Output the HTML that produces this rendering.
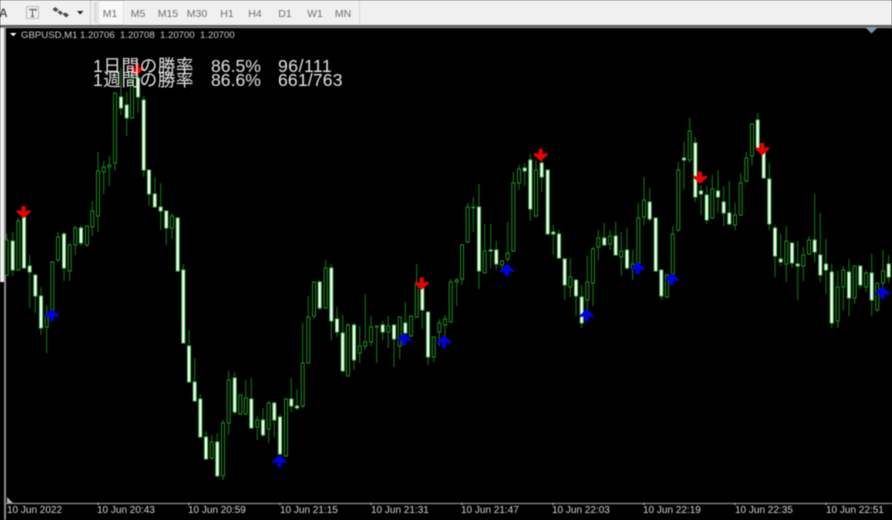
<!DOCTYPE html>
<html lang="ja"><head><meta charset="utf-8"><title>GBPUSD,M1</title>
<style>
html,body{margin:0;padding:0;background:#000;}
#r{position:relative;width:892px;height:520px;overflow:hidden;background:#000;filter:blur(.5px);font-family:"Liberation Sans","Noto Sans CJK JP",sans-serif;}
#r div,#r span,#r svg{position:absolute;}
.tb{left:0;top:0;width:892px;height:25px;background:#f0f0f0;}
.tf{top:7px;width:30px;text-align:center;font-size:10.5px;line-height:14px;color:#6f6f6f;}
.ax{top:505px;font-size:10px;line-height:12px;color:#d4d4d4;white-space:nowrap;}
.hd{top:30px;font-size:9.6px;line-height:12px;color:#cccccc;white-space:nowrap;}
.ov{font-size:17.6px;line-height:18px;color:#e2e2e2;white-space:nowrap;}
</style></head><body>
<div id="r">
<div class="tb"></div>
<div style="left:0;top:25px;width:892px;height:2px;background:#5a5a5a"></div>
<div style="left:0;top:27px;width:892px;height:1px;background:#9a9a9a"></div>
<div style="left:0;top:28px;width:4px;height:254px;background:#f0f0f0"></div>
<div style="left:4px;top:28px;width:2px;height:492px;background:#8c8c8c"></div>
<div style="left:90px;top:0;width:1px;height:25px;background:#cfcfcf"></div>
<div style="left:94px;top:2px;width:3px;height:21px;background:#dcdcdc"></div>
<div style="left:98px;top:0;width:26px;height:25px;background:#f8f8f8;box-shadow:inset 0 0 0 1px #e0e0e0"></div>
<div style="left:359px;top:0;width:1px;height:25px;background:#d8d8d8"></div>
<span style="left:-1px;top:6px;font-size:12px;line-height:14px;font-weight:bold;color:#555">A</span>
<svg style="left:24px;top:4px" width="68" height="18" viewBox="0 0 68 18">
<rect x="2.5" y="2.5" width="12" height="12" fill="none" stroke="#8a8a8a" stroke-dasharray="1 1"/>
<path d="M5 5.500h7v1.500M8.500 5.500V12.500M7 12.500h3" fill="none" stroke="#666" stroke-width="1.200"/>
<path d="M31 3l3.500 2.500-2.500 2.500-3.500-2.500zM33.500 8l2.500-1.500 3 2.500-2.500 2zM38.500 10l3-1.500 3.500 2.500-3 2.500z" fill="#4a4a4a"/>
<path d="M53 7h6.500l-3.250 3.500z" fill="#222"/>
</svg>
<div class="tf" style="left:95px">M1</div><div class="tf" style="left:123px">M5</div><div class="tf" style="left:153px">M15</div><div class="tf" style="left:182px">M30</div><div class="tf" style="left:212px">H1</div><div class="tf" style="left:240px">H4</div><div class="tf" style="left:270px">D1</div><div class="tf" style="left:300px">W1</div><div class="tf" style="left:328px">MN</div>

<svg style="left:0;top:0" width="892" height="520" viewBox="0 0 892 520">
<path d="M866 28h11l-5.500 5.500z" fill="#7f95ab"/>
<path d="M10 33h6.500l-3.250 3.200z" fill="#fff"/>
<path d="M7 497v6h6z" fill="#a9b8c8"/>
<path d="M6 503.500H892" stroke="#8c8c8c" stroke-width="1.300"/>
<path d="M98 503v2M189 503v2M280 503v2M371 503v2M462 503v2M553 503v2M644 503v2M735 503v2M826 503v2" stroke="#ccc"/>
<path fill="none" stroke="#127212" stroke-width="1.100" d="M6.700 234V276M12.700 232V276M18.300 218V271M24 217V268M29.700 255V308M35.300 275V313M41 287V335M46.700 305V353M52.300 261V314M58 232V262M64 232V281M69.700 243V281M75.300 226V255M81 225V246M87 226V247M92.300 201V236M98 152V232M103.700 161V194M109.300 156V186M115 93V171M121 68V115M126.700 92V136M132 70V118M138 72V113M143.700 96V177M149 170V206M155 177V207M160.700 183V230M166.300 211V245M172 213V239M177.700 217V272M183.300 264V343M189 330V382M194.700 358V401M200.300 394V437M206 431V460M211.700 435V460M217.300 433V477M223 420V480M228.700 371V435M234.700 372V414M240.300 395V415M245.700 380V415M251.300 378V428M257.300 416V440M263 408V437M268.700 401V443M274.300 402V437M280 414V455M286 398V457M291.300 378V412M297 389V410M302.700 323V408M308.300 296V363M314 282V319M319.700 280V310M325.700 260V309M331.300 264V340M337 307V337M342.700 315V371M348 323V376M354 323V370M359.700 326V363M365.300 294V350M371 316V346M376.700 326V363M382.700 321V340M388.300 316V348M394 325V367M399.700 317V359M405.300 302V345M411 316V337M416.700 264V318M422.300 282V329M428 312V365M433.700 337V362M439.300 319V346M445 315V345M450.700 279V322M456.700 278V306M462 244V285M467.700 203V243M473.300 197V232M479 184V289M484.700 224V273M490.700 224V268M496.300 241V270M502 260V272M507.700 222V262M513.300 172V252M519 165V190M524.700 163V186M530.300 154V221M536 160V217M541.700 160V192M547.700 170V235M553.300 225V255M559 230V259M564.700 258V300M570.300 258V297M576 280V316M581.700 285V328M587.300 256V315M593 247V306M598.300 230V260M604.300 223V246M610 230V250M615.700 222V256M621.300 232V276M627 228V270M632.700 250V280M638.300 203V265M644 177V225M649.700 188V222M655.700 218V272M661.300 270V300M667 274V298M672.700 226V275M678.300 162V232M684 142V189M689.700 118V163M695.300 137V202M701 185V215M706.700 186V224M712.300 175V219M718 170V213M723.700 186V226M729.300 181V225M735 203V230M740.700 173V216M746.300 152V183M752 123V165M757.700 113V150M763.700 145V178M769.300 163V230M775 225V277M780.700 234V266M786.300 226V282M792 243V268M797.700 241V300M803.300 247V281M809 236V255M814.700 194V262M820.300 213V282M826 239V294M831.700 264V328M837.700 271V328M843.300 266V310M849 259V316M854.700 266V304M860.300 266V289M866 270V292M871.700 254V316M877.300 283V312M883 250V288M888.700 255V283"/>
<path fill="#000" stroke="#1f8a1f" stroke-width="1" d="M5.200 240h3V275h-3zM16.800 221h3V270h-3zM45.200 315h3V327h-3zM50.800 262h3V310h-3zM56.500 237h3V260h-3zM68.200 245h3V271h-3zM73.800 228h3V245h-3zM85.500 226h3V245h-3zM90.800 211h3V227h-3zM96.500 171h3V216h-3zM102.200 167h3V172h-3zM107.800 165h3V167h-3zM113.500 93h3V163h-3zM130.500 75h3V118h-3zM170.500 216h3V228h-3zM210.200 442h3V458h-3zM221.500 423h3V476h-3zM227.200 380h3V423h-3zM238.800 395h3V414h-3zM244.200 398h3V414h-3zM255.800 420h3V427h-3zM267.200 403h3V429h-3zM284.500 399h3V456h-3zM301.200 363h3V406h-3zM306.800 317h3V363h-3zM312.500 282h3V316h-3zM324.200 268h3V308h-3zM346.500 325h3V376h-3zM358.200 346h3V353h-3zM363.800 342h3V346h-3zM369.500 327h3V342h-3zM375.200 326h3V327h-3zM386.800 326h3V332h-3zM398.200 317h3V346h-3zM409.500 316h3V336h-3zM415.200 285h3V317h-3zM432.200 337h3V357h-3zM437.800 323h3V332h-3zM443.500 319h3V325h-3zM449.200 282h3V322h-3zM455.200 280h3V282h-3zM460.500 245h3V279h-3zM466.200 207h3V242h-3zM471.800 207h3V208h-3zM483.200 251h3V273h-3zM500.500 261h3V265h-3zM506.200 253h3V259h-3zM511.800 183h3V251h-3zM517.500 169h3V183h-3zM534.500 170h3V216h-3zM568.800 277h3V287h-3zM585.800 282h3V300h-3zM591.500 249h3V283h-3zM596.800 238h3V247h-3zM608.500 236h3V244h-3zM619.800 251h3V257h-3zM631.200 264h3V269h-3zM636.800 218h3V263h-3zM642.500 200h3V217h-3zM665.500 275h3V297h-3zM671.200 234h3V274h-3zM676.800 170h3V230h-3zM688.200 131h3V160h-3zM710.800 189h3V218h-3zM733.500 215h3V225h-3zM739.200 183h3V215h-3zM744.800 158h3V181h-3zM750.500 124h3V156h-3zM784.800 241h3V264h-3zM801.800 255h3V266h-3zM807.500 240h3V254h-3zM836.200 287h3V321h-3zM841.800 270h3V287h-3zM853.200 266h3V298h-3zM864.500 273h3V287h-3zM875.800 283h3V310h-3zM881.500 271h3V283h-3z"/>
<path fill="#ffffff" stroke="#52c45a" stroke-width="1" d="M11.200 241h3V270h-3zM22.500 217h3V268h-3zM28.200 266h3V272h-3zM33.800 275h3V296h-3zM39.500 296h3V328h-3zM62.500 234h3V268h-3zM79.500 228h3V243h-3zM119.500 97h3V108h-3zM125.200 105h3V118h-3zM136.500 78h3V97h-3zM142.200 100h3V170h-3zM147.500 170h3V194h-3zM153.300 194h3V207h-3zM159.200 207h3V211h-3zM164.800 211h3V228h-3zM176.200 218h3V271h-3zM181.800 270h3V343h-3zM187.500 346h3V382h-3zM193.200 382h3V401h-3zM198.800 399h3V437h-3zM204.500 437h3V459h-3zM215.800 442h3V476h-3zM233.200 378h3V412h-3zM249.800 399h3V428h-3zM261.500 420h3V435h-3zM272.800 403h3V420h-3zM278.500 417h3V454h-3zM289.800 399h3V406h-3zM295.500 406h3V408h-3zM318.200 282h3V308h-3zM329.800 268h3V321h-3zM335.500 319h3V332h-3zM341.200 333h3V371h-3zM352.500 325h3V360h-3zM381.200 325h3V332h-3zM392.500 325h3V339h-3zM403.800 323h3V333h-3zM420.800 288h3V310h-3zM426.500 312h3V357h-3zM477.500 207h3V271h-3zM489.200 250h3V251h-3zM494.800 250h3V264h-3zM523.200 168h3V171h-3zM528.800 160h3V209h-3zM540.200 163h3V177h-3zM546.200 170h3V234h-3zM551.800 232h3V234h-3zM557.500 234h3V258h-3zM563.200 259h3V285h-3zM574.500 280h3V296h-3zM580.200 297h3V323h-3zM602.800 238h3V245h-3zM614.200 236h3V255h-3zM625.500 250h3V268h-3zM648.200 202h3V219h-3zM654.200 218h3V271h-3zM659.800 270h3V296h-3zM682.500 158h3V160h-3zM693.800 143h3V197h-3zM699.500 191h3V194h-3zM705.200 195h3V220h-3zM716.500 191h3V197h-3zM722.200 202h3V213h-3zM727.800 213h3V224h-3zM756.200 120h3V148h-3zM762.200 153h3V178h-3zM767.800 179h3V224h-3zM773.500 228h3V256h-3zM779.200 259h3V262h-3zM790.500 243h3V263h-3zM796.200 264h3V266h-3zM813.200 240h3V252h-3zM818.800 255h3V275h-3zM824.500 264h3V270h-3zM830.200 272h3V323h-3zM847.500 272h3V298h-3zM858.800 266h3V285h-3zM870.200 273h3V300h-3zM887.200 264h3V277h-3z"/>
<defs>
<path id="u" d="M0 0L6.800 6.200V8.400L2 7V12.300H-2V7L-6.800 8.400V6.200z"/>
<path id="d" d="M0 12.300L6.800 6.100V3.900L2 5.300V0H-2V5.300L-6.800 3.900V6.100z"/>
</defs>
<g fill="#f00000">
<use href="#d" x="23.500" y="206"/><use href="#d" x="137" y="63"/><use href="#d" x="421.700" y="277.500"/><use href="#d" x="540.700" y="149"/><use href="#d" x="700" y="171.500"/><use href="#d" x="762.300" y="143"/>
</g>
<g fill="#0000e6">
<use href="#u" x="51.700" y="309"/><use href="#u" x="279.300" y="455"/><use href="#u" x="404.300" y="333"/><use href="#u" x="444" y="335.500"/><use href="#u" x="507" y="264"/><use href="#u" x="586.700" y="309"/><use href="#u" x="637.700" y="262"/><use href="#u" x="671.700" y="273"/><use href="#u" x="882.300" y="286.500"/>
</g>
</svg>

<span class="hd" style="left:21px">GBPUSD,M1</span><span class="hd" style="left:80px">1.20706</span><span class="hd" style="left:120px">1.20708</span><span class="hd" style="left:160px">1.20700</span><span class="hd" style="left:200px">1.20700</span>

<span class="ov" style="left:93px;top:57px;letter-spacing:.55px">1日間の勝率</span><span class="ov" style="left:211px;top:57px">86.5%</span><span class="ov" style="left:278px;top:57px;letter-spacing:.5px">96/111</span>
<span class="ov" style="left:93px;top:71px;letter-spacing:.55px">1週間の勝率</span><span class="ov" style="left:211px;top:71px">86.6%</span><span class="ov" style="left:278px;top:71px;letter-spacing:.15px">661/763</span>

<span class="ax" style="left:7px">10 Jun 2022</span><span class="ax" style="left:97px">10 Jun 20:43</span><span class="ax" style="left:188px">10 Jun 20:59</span><span class="ax" style="left:280px">10 Jun 21:15</span><span class="ax" style="left:371px">10 Jun 21:31</span><span class="ax" style="left:461px">10 Jun 21:47</span><span class="ax" style="left:552px">10 Jun 22:03</span><span class="ax" style="left:643px">10 Jun 22:19</span><span class="ax" style="left:735px">10 Jun 22:35</span><span class="ax" style="left:826px">10 Jun 22:51</span>
</div>
</body></html>
